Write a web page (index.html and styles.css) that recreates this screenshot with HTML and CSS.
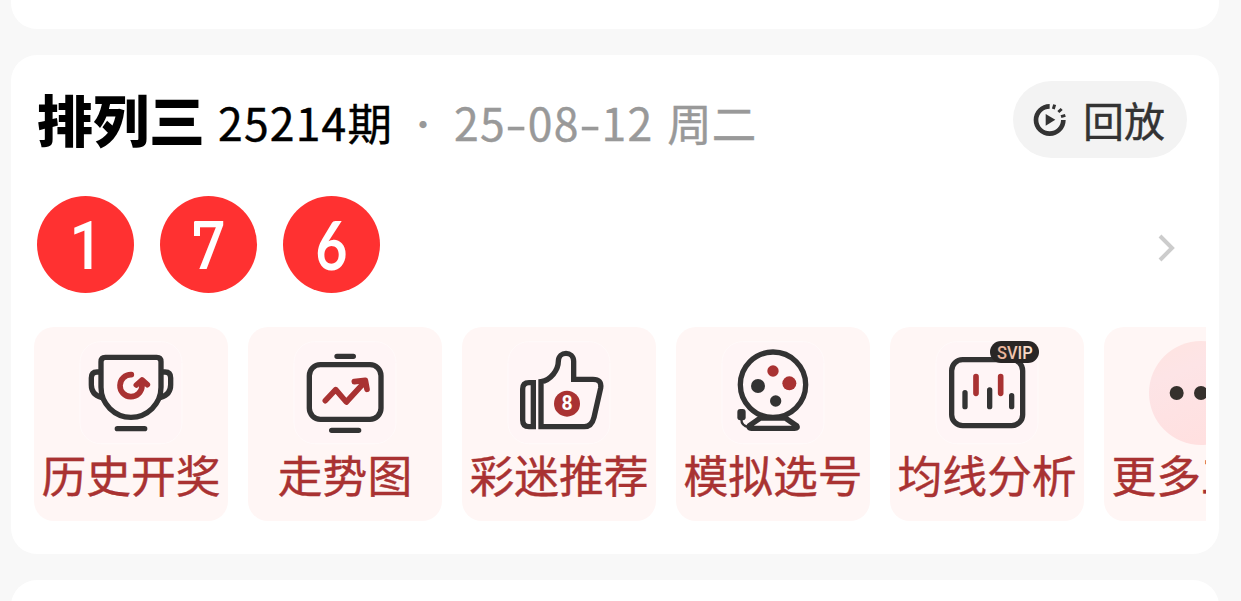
FILE: index.html
```html
<!DOCTYPE html>
<html lang="zh-CN">
<head>
    <meta charset="UTF-8">
    <title>排列三</title>
    <link rel="stylesheet" href="styles.css">
</head>
<body>
<div class="page">
    <div class="card card-prev"></div>
    <div class="card">
        <div class="head">
            <h2 class="name">排列三</h2>
            <span class="issue"><span class="num">25214</span>期</span>
            <span class="dot">·</span>
            <span class="date"><span class="num">25<i>-</i>08<i>-</i>12</span> 周二</span>
            <a class="replay">
                <svg class="replay-icon" viewBox="0 0 102 102">
                    <path d="M50 10A41 41 0 1 0 91 51" fill="none" stroke="#333" stroke-width="14"/>
                    <path d="M61 18L65 5M76 27L86 18M84 41L97 37" fill="none" stroke="#333" stroke-width="9"/>
                    <path d="M38 33L67 50L38 68Z" fill="#333"/>
                </svg>
                <span>回放</span>
            </a>
        </div>
        <div class="result">
            <span class="ball"><b>1</b></span>
            <span class="ball seven"><b>7</b></span>
            <span class="ball six"><b>6</b></span>
            <svg class="more" viewBox="0 0 18 28"><path d="M2 2L14 14L2 26" fill="none" stroke="#ccc" stroke-width="4"/></svg>
        </div>
        <ul class="nav">
            <li>
                <svg class="icon" viewBox="150 63 309 309">
                    <rect class="plate" x="150" y="65" width="306" height="306" rx="62"/>
                    <g class="line">
                        <path d="M213 125Q213 112 226 112H380Q393 112 393 125V202C393 252 352 292 303 292S213 252 213 202Z"/>
                        <path d="M209 156H201Q184 156 184 174V194C184 214 196 227 214 232M397 156H405Q422 156 422 174V194C422 214 410 227 392 232"/>
                        <path d="M262 326H344"/>
                    </g>
                    <path class="red-line" d="M304 164A33 33 0 1 0 336 198V187M319 195L336 180L352 194"/>
                </svg>
                <span>历史开奖</span>
            </li>
            <li>
                <svg class="icon" viewBox="162 63 309 309">
                    <rect class="plate" x="162" y="65" width="306" height="306" rx="62"/>
                    <g class="line">
                        <rect x="208" y="134" width="215" height="164" rx="33"/>
                        <path d="M291 109H340M275 331H356"/>
                    </g>
                    <path class="red-line" d="M256 242L287 209L319 246L376 184M343 185L376 181L381 208"/>
                </svg>
                <span>走势图</span>
            </li>
            <li>
                <svg class="icon" viewBox="159 63 309 309">
                    <rect class="plate" x="159" y="65" width="306" height="306" rx="62"/>
                    <g class="line">
                        <path d="M235 188H222Q203 188 203 207V300Q203 320 222 320H235Z" stroke-linejoin="miter"/>
                        <path d="M258 320V185C287 181 310 150 310 124C310 92 356 92 356 124V178H414Q441 178 437 204L417 292Q410 320 388 320Z" stroke-linejoin="miter"/>
                    </g>
                    <circle cx="336" cy="251" r="39" fill="#a93232"/>
                    <text class="eight" x="336" y="271" text-anchor="middle">8</text>
                </svg>
                <span>彩迷推荐</span>
            </li>
            <li>
                <svg class="icon" viewBox="156 63 309 309">
                    <rect class="plate" x="156" y="65" width="306" height="306" rx="62"/>
                    <g class="line">
                        <circle cx="309" cy="194" r="98"/>
                        <path d="M271 294L238 317Q235 325 244 325H374Q385 325 380 317Q360 304 346 294Z"/>
                        <path class="cord" d="M214 297Q214 318 236 321"/>
                    </g>
                    <rect x="202" y="267" width="25" height="34" rx="9" fill="#333"/>
                    <circle cx="264" cy="198" r="21" fill="#333"/>
                    <circle cx="317" cy="243" r="17" fill="#333"/>
                    <circle cx="309" cy="153" r="17" fill="#a93232"/>
                    <circle cx="358" cy="190" r="21" fill="#a93232"/>
                </svg>
                <span>模拟选号</span>
            </li>
            <li>
                <svg class="icon" viewBox="153 63 309 309">
                    <defs>
                        <linearGradient id="gold" x1="0" x2="1">
                            <stop offset="0" stop-color="#e8ab90"/>
                            <stop offset="1" stop-color="#fbe6d4"/>
                        </linearGradient>
                    </defs>
                    <rect class="plate" x="153" y="65" width="306" height="306" rx="62"/>
                    <g class="line">
                        <rect x="200" y="119" width="213" height="198" rx="33"/>
                        <path d="M240 218V260M314 210V260M380 227V260"/>
                    </g>
                    <path class="red-line" d="M273 170V220M347 170V220"/>
                    <rect x="315" y="63" width="147" height="66" rx="33" fill="#292625"/>
                    <text class="svip" x="336" y="116" textLength="107" lengthAdjust="spacingAndGlyphs" fill="url(#gold)">SVIP</text>
                </svg>
                <span>均线分析</span>
            </li>
            <li>
                <svg class="icon" viewBox="180 63 309 309">
                    <defs>
                        <linearGradient id="pink" x1="0" x2=".4" y1="0" y2="1">
                            <stop offset="0" stop-color="#ffe4e0"/>
                            <stop offset=".35" stop-color="#fde4e6"/>
                            <stop offset="1" stop-color="#ffe0e0"/>
                        </linearGradient>
                    </defs>
                    <circle cx="333" cy="219" r="156" fill="url(#pink)"/>
                    <circle cx="260" cy="219" r="21" fill="#35302c"/>
                    <circle cx="333" cy="219" r="21" fill="#35302c"/>
                    <circle cx="406" cy="219" r="21" fill="#35302c"/>
                </svg>
                <span>更多工具</span>
            </li>
        </ul>
    </div>
    <div class="card card-next"></div>
</div>
</body>
</html>
```

FILE: styles.css
```css
*{
    margin:0;
    padding:0;
    box-sizing:border-box;
}
li{
    list-style:none;
}
body{
    background:#f8f8f8;
    font-family:"Noto Sans CJK SC",sans-serif;
    overflow:hidden;
}
.page{
    height:601px;
    padding:0 22px 0 11px;
    overflow:hidden;
}
.card{
    height:499px;
    padding:26px 13px 0 23px;
    margin-bottom:26px;
    background:#fff;
    border-radius:26px;
}
.card-prev{
    height:29px;
    border-radius:0 0 26px 26px;
}
.card-next{
    height:60px;
}
.head{
    display:flex;
    height:77px;
    padding:0 19px 0 3px;
    line-height:77px;
    white-space:nowrap;
}
.name{
    width:181px;
    font-size:56px;
    font-weight:900;
    line-height:73px;
}
.issue{
    width:182px;
    padding-top:2px;
    font-size:44.500px;
    -webkit-text-stroke:.4px #000;
}
.num{
    letter-spacing:1.200px;
}
.dot{
    width:54px;
    padding:4px 0 0 6px;
    font-size:34px;
    color:#999;
}
.date{
    padding-top:2px;
    font-size:44.500px;
    word-spacing:4px;
    color:#999;
    -webkit-text-stroke:.4px #999;
}
.date i{
    display:inline-block;
    width:22px;
    font-style:normal;
    text-align:center;
    transform:scaleX(1.4);
}
.replay{
    display:flex;
    align-items:center;
    width:174px;
    height:77px;
    margin-left:auto;
    padding-left:20px;
    background:#f3f3f3;
    border-radius:39px;
    font-size:41px;
    color:#333;
    -webkit-text-stroke:.4px #333;
}
.replay-icon{
    width:34px;
    height:34px;
    margin-right:16px;
}
.result{
    display:flex;
    align-items:center;
    gap:26px;
    margin-top:38px;
    padding:0 30px 0 3px;
}
.ball{
    display:flex;
    position:relative;
    align-items:center;
    justify-content:center;
    width:97px;
    height:97px;
    background:#ff3131;
    border-radius:50%;
    color:#fff;
}
.ball b{
    font-family:Roboto,sans-serif;
    font-size:67px;
    font-weight:500;
    line-height:97px;
    transform:translate(1px,2px) scaleX(.87);
}
/* serif on the left end of the 7 */
.seven:before{
    content:"";
    position:absolute;
    left:34px;
    top:26px;
    width:6px;
    height:14px;
    background:#fff;
}
.ball.six b{
    font-family:Lato,sans-serif;
    font-weight:700;
    transform:scaleX(.82);
}
.more{
    width:18px;
    height:28px;
    margin:6px 0 0 auto;
}
.nav{
    display:flex;
    gap:20px;
    margin-top:34px;
    overflow:hidden;
}
.nav li{
    display:flex;
    flex:none;
    flex-direction:column;
    align-items:center;
    width:194px;
    height:194px;
    padding-top:14px;
    background:#fff6f5;
    border-radius:20px;
    font-size:44.800px;
    line-height:56px;
    color:#a93232;
    -webkit-text-stroke:.4px #a93232;
    white-space:nowrap;
}
.icon{
    flex:none;
    width:103px;
    height:103px;
    margin-bottom:2px;
    overflow:visible;
    -webkit-text-stroke:0;
}
.plate{
    fill:#fff5f6;
    stroke:#fffafa;
    stroke-width:3;
}
.line{
    fill:none;
    stroke:#333;
    stroke-width:16;
    stroke-linecap:round;
    stroke-linejoin:round;
}
.cord{
    stroke-width:7;
}
.red-line{
    fill:none;
    stroke:#a93232;
    stroke-width:17;
    stroke-linecap:round;
    stroke-linejoin:round;
}
.eight{
    font-family:Roboto,sans-serif;
    font-size:58px;
    font-weight:700;
    fill:#fff;
}
.svip{
    font-family:Roboto,sans-serif;
    font-size:53px;
    font-weight:500;
}
```
